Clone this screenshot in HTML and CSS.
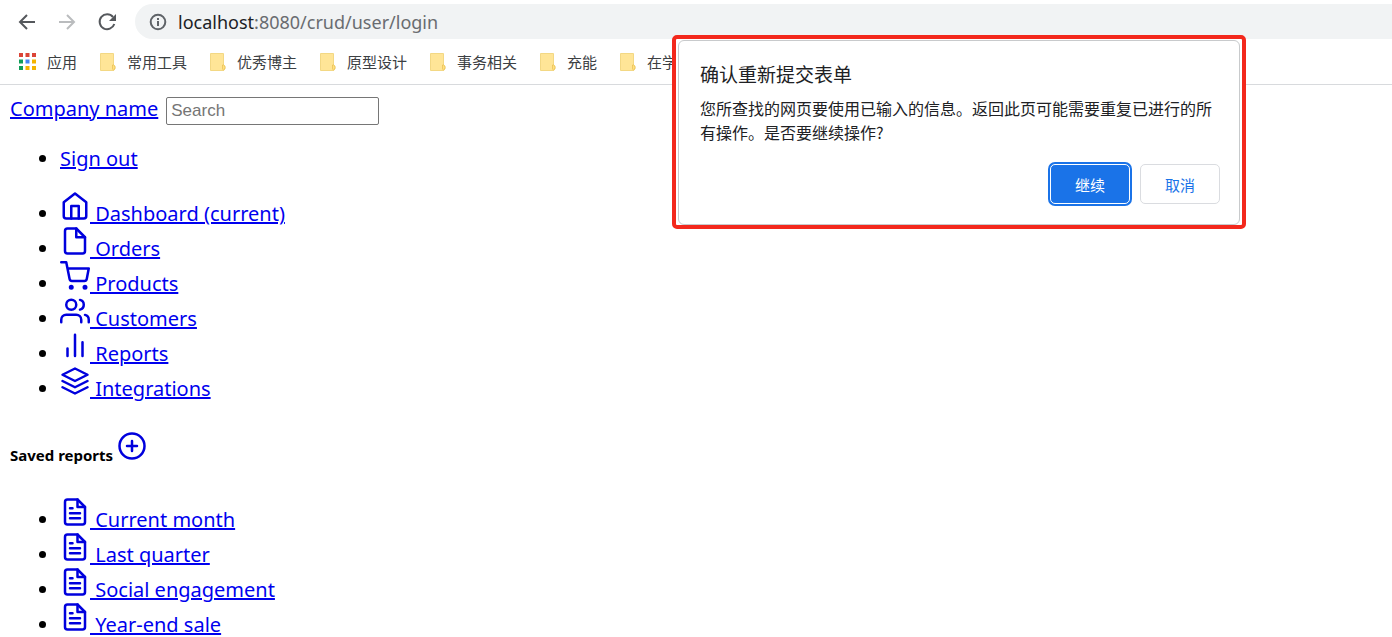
FILE: index.html
```html
<!DOCTYPE html>
<html lang="zh-CN">
<head>
<meta charset="utf-8">
<title>localhost:8080/crud/user/login</title>
<link rel="stylesheet" href="styles.css">
</head>
<body>
<svg class="defs" aria-hidden="true">
  <symbol id="folder" viewBox="0 0 17 20">
    <path d="M1.5 1.5h13v11.500q2 .5 1.500 3.500-.5 2-2 2h-12.500z" fill="#ffe597" stroke="#f3d884"/>
    <path d="M13.500 13v3q0 2 1 2 1.500-.5 1.500-2.500t-1.200-2.500z" fill="#ffe083" stroke="#e9bf4c" stroke-width=".7"/>
  </symbol>
  <symbol id="file-text" viewBox="0 0 24 24">
    <path d="M14 2H6a2 2 0 0 0-2 2v16a2 2 0 0 0 2 2h12a2 2 0 0 0 2-2V8z"/><path d="M14 2v6h6M16 13H8M16 17H8M10 9H8"/>
  </symbol>
</svg>
<header class="browser">
  <div class="toolbar">
    <button class="tool" aria-label="后退"><svg viewBox="0 0 20 20"><path d="M18 10H3M10 3L3 10l7 7"/></svg></button>
    <button class="tool tool-off" aria-label="前进"><svg viewBox="0 0 20 20"><path d="M2 10h15M10 3l7 7-7 7"/></svg></button>
    <button class="tool" aria-label="刷新"><svg viewBox="0 0 20 20"><path d="M16 5A7.500 7.500 0 1 0 17.300 12"/><path class="solid" d="M19 2v7h-7z"/></svg></button>
    <div class="address">
      <svg class="info" viewBox="0 0 18 18"><circle cx="9" cy="9" r="7.300"/><path d="M9 8v5M9 5v2"/></svg>
      <span><span class="host">localhost</span>:8080/crud/user/login</span>
    </div>
  </div>
  <nav class="bookmarks" aria-label="书签">
    <a class="bookmark" href="#"><svg class="apps" viewBox="0 0 17 17"><path fill="#db4437" d="M0 0h4v4H0zM6.500 0h4v4h-4zM13 0h4v4h-4z"/><path fill="#0f9d58" d="M0 6.500h4v4H0zM0 13h4v4H0z"/><path fill="#4285f4" d="M6.500 6.500h4v4h-4z"/><path fill="#f4b400" d="M13 6.500h4v4h-4zM6.500 13h4v4h-4zM13 13h4v4h-4z"/></svg>应用</a>
    <a class="bookmark" href="#"><svg class="folder"><use href="#folder"/></svg>常用工具</a>
    <a class="bookmark" href="#"><svg class="folder"><use href="#folder"/></svg>优秀博主</a>
    <a class="bookmark" href="#"><svg class="folder"><use href="#folder"/></svg>原型设计</a>
    <a class="bookmark" href="#"><svg class="folder"><use href="#folder"/></svg>事务相关</a>
    <a class="bookmark" href="#"><svg class="folder"><use href="#folder"/></svg>充能</a>
    <a class="bookmark" href="#"><svg class="folder"><use href="#folder"/></svg>在学课</a>
  </nav>
</header>
<main class="page">
  <div class="topline"><a href="#">Company name</a><input class="search" type="text" placeholder="Search" aria-label="Search"></div>
  <ul class="list">
    <li><a href="#">Sign out</a></li>
  </ul>
  <ul class="list">
    <li><a href="#"><svg class="icon" viewBox="0 0 24 24"><path d="M3 9l9-7 9 7v11a2 2 0 0 1-2 2H5a2 2 0 0 1-2-2z"/><path d="M9 22V12h6v10"/></svg> Dashboard (current)</a></li>
    <li><a href="#"><svg class="icon" viewBox="0 0 24 24"><path d="M13 2H6a2 2 0 0 0-2 2v16a2 2 0 0 0 2 2h12a2 2 0 0 0 2-2V9z"/><path d="M13 2v7h7"/></svg> Orders</a></li>
    <li><a href="#"><svg class="icon" viewBox="0 0 24 24"><circle cx="9" cy="21" r="1"/><circle cx="20" cy="21" r="1"/><path d="M1 1h4l2.680 13.390a2 2 0 0 0 2 1.610h9.720a2 2 0 0 0 2-1.610L23 6H6"/></svg> Products</a></li>
    <li><a href="#"><svg class="icon" viewBox="0 0 24 24"><path d="M17 21v-2a4 4 0 0 0-4-4H5a4 4 0 0 0-4 4v2"/><circle cx="9" cy="7" r="4"/><path d="M23 21v-2a4 4 0 0 0-3-3.870M16 3.130a4 4 0 0 1 0 7.750"/></svg> Customers</a></li>
    <li><a href="#"><svg class="icon" viewBox="0 0 24 24"><path d="M18 20V9M12 20V3M6 20v-6"/></svg> Reports</a></li>
    <li><a href="#"><svg class="icon" viewBox="0 0 24 24"><path d="M12 2L2 7l10 5 10-5z"/><path d="M2 17l10 5 10-5M2 12l10 5 10-5"/></svg> Integrations</a></li>
  </ul>
  <h5 class="heading">Saved reports <a href="#" aria-label="Add report"><svg class="icon" viewBox="0 0 24 24"><circle cx="12" cy="12" r="10"/><path d="M12 8v8M8 12h8"/></svg></a></h5>
  <ul class="list">
    <li><a href="#"><svg class="icon"><use href="#file-text"/></svg> Current month</a></li>
    <li><a href="#"><svg class="icon"><use href="#file-text"/></svg> Last quarter</a></li>
    <li><a href="#"><svg class="icon"><use href="#file-text"/></svg> Social engagement</a></li>
    <li><a href="#"><svg class="icon"><use href="#file-text"/></svg> Year-end sale</a></li>
  </ul>
</main>
<div class="marker">
  <section class="dialog" role="dialog" aria-labelledby="dialog-title">
    <h2 class="dialog-title" id="dialog-title">确认重新提交表单</h2>
    <p class="dialog-text">您所查找的网页要使用已输入的信息。返回此页可能需要重复已进行的所有操作。是否要继续操作?</p>
    <div class="actions">
      <button class="btn btn-primary">继续</button>
      <button class="btn">取消</button>
    </div>
  </section>
</div>
</body>
</html>
```
FILE: styles.css
```css
* { box-sizing: border-box; }
body {
  position: relative;
  margin: 0;
  background: #fff;
  color: #000;
  font: 20px/24px "Noto Sans", "Noto Sans CJK SC", sans-serif;
}
.defs { position: absolute; width: 0; height: 0; }

.browser { border-bottom: 1px solid #d8dadd; }
.toolbar {
  display: flex;
  align-items: center;
  gap: 20px;
  padding: 4px 0 0 17px;
}
.tool {
  width: 20px;
  height: 20px;
  padding: 0;
  border: 0;
  background: none;
  color: #55585c;
}
.tool-off { color: #babcbe; }
.tool svg { display: block; width: 20px; height: 20px; fill: none; stroke: currentColor; stroke-width: 2; }
.tool .solid { fill: currentColor; stroke: none; }
.address {
  display: flex;
  flex: 1;
  align-items: center;
  gap: 11px;
  height: 35px;
  margin-left: -2px;
  padding-left: 14px;
  border-radius: 18px 0 0 18px;
  background: #f1f3f4;
  color: #696c70;
  font-size: 18px;
}
.host { color: #202124; }
.info { width: 18px; height: 18px; fill: none; stroke: #5f6368; stroke-width: 2; }
.bookmarks {
  display: flex;
  gap: 22px;
  height: 45px;
  padding-left: 19px;
  align-items: center;
  font: 15px/20px "Noto Sans CJK SC", sans-serif;
}
.bookmark { display: flex; align-items: center; gap: 11px; color: #3c4043; text-decoration: none; white-space: nowrap; }
.apps { width: 17px; height: 17px; }
.folder { width: 17px; height: 20px; }

.page { padding: 12px 10px 0; }
.page a { color: #0000ee; text-decoration-thickness: 2px; }
.topline { display: flex; align-items: flex-start; gap: 8px; height: 30px; }
.search {
  width: 213px;
  height: 28px;
  padding: 0 4px;
  border: 1px solid #767676;
  border-radius: 2px;
  font: 17px "Liberation Sans", sans-serif;
}
.search::placeholder { color: #757575; }
.list { margin: 20px 0; padding-left: 50px; }
.list:last-child { margin-bottom: 0; }
.icon {
  width: 30px;
  height: 30px;
  fill: none;
  stroke: #0000dd;
  stroke-width: 2;
  stroke-linecap: round;
  stroke-linejoin: round;
}
.heading { margin: 30px 0; font-size: 15px; }

.marker {
  position: absolute;
  top: 35px;
  right: 146px;
  width: 574px;
  padding: 1px 2px 0;
  border: 4px solid #f3281c;
  border-radius: 5px;
  background: #fff;
}
.dialog {
  padding: 21px 19px 20px 21px;
  border: 1px solid #c8cacc;
  border-radius: 6px;
  background: #fff;
  color: #202124;
  font-family: "Noto Sans CJK SC", sans-serif;
}
.dialog-title { margin: 0; font-size: 19px; font-weight: 400; line-height: 24px; }
.dialog-text { margin: 10px 0 20px; font-size: 16px; line-height: 24px; }
.actions { display: flex; justify-content: flex-end; gap: 10px; }
.btn {
  width: 80px;
  height: 40px;
  border: 1px solid #dadce0;
  border-radius: 5px;
  background: #fff;
  color: #1a73e8;
  font: 15px "Noto Sans CJK SC", sans-serif;
}
.btn-primary {
  border-color: #fff;
  background: #1a73e8;
  color: #fff;
  box-shadow: 0 0 0 2px #1a73e8;
}
```
